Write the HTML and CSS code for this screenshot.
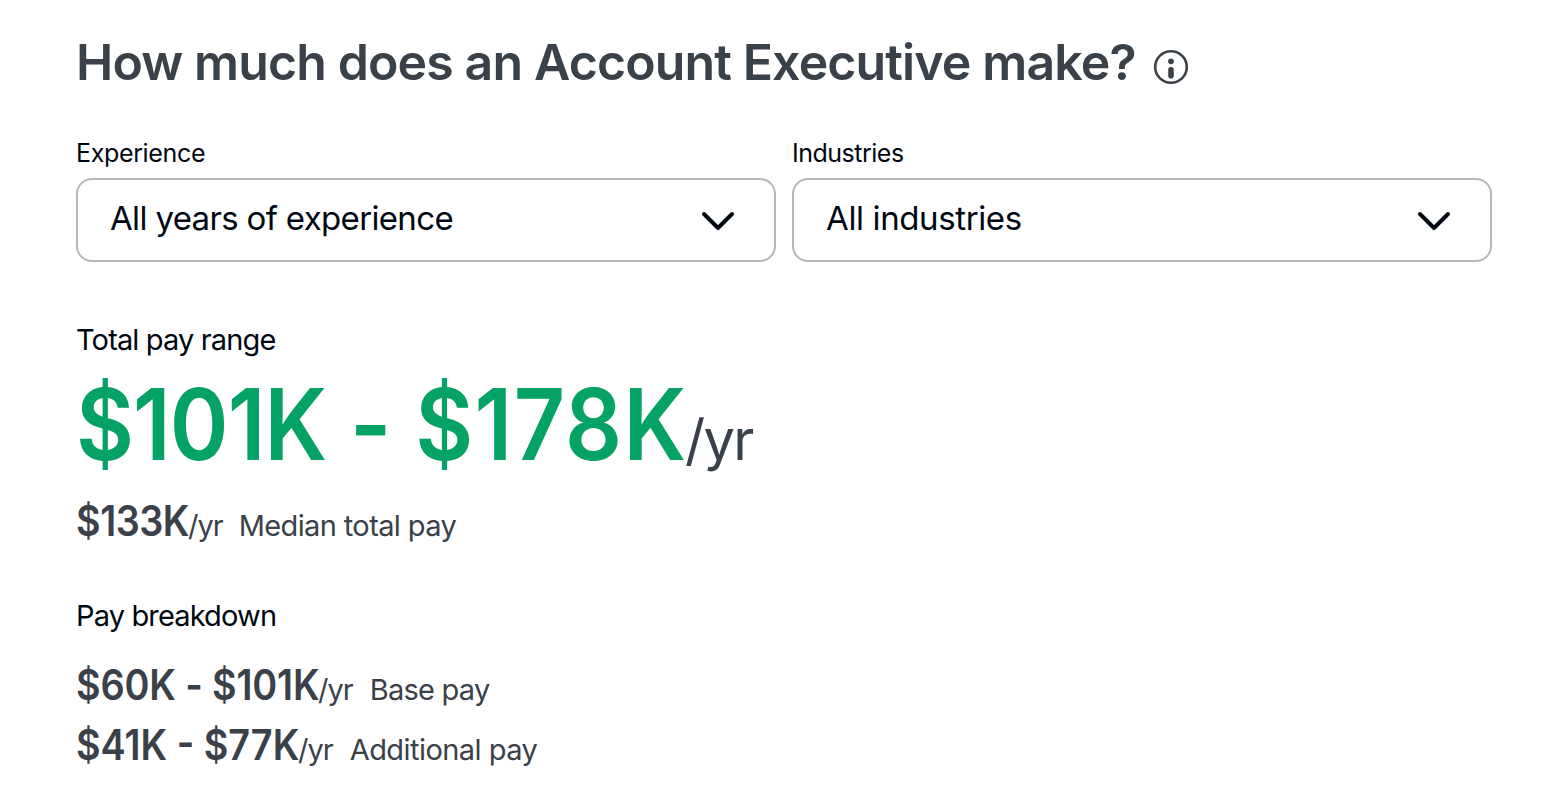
FILE: index.html
```html
<!DOCTYPE html>
<html lang="en">
<head>
    <meta charset="utf-8">
    <title>Account Executive Salary</title>
    <meta name="viewport" content="width=device-width, initial-scale=1">
    <link rel="stylesheet" href="styles.css">
</head>
<body>

<main class="salary">
  <div class="heading">
    <h1 class="title">How much does an Account Executive make?</h1>
    <svg class="info" viewBox="0 0 36 36" aria-hidden="true">
      <circle cx="18" cy="18" r="15.8" fill="none" stroke="currentColor" stroke-width="2.6"/>
      <circle cx="18" cy="12.3" r="2.9" fill="currentColor"/>
      <path d="M18 20.9v5.8" stroke="currentColor" stroke-width="5.6" stroke-linecap="round"/>
    </svg>
  </div>

  <div class="filters">
    <div class="filter">
      <div class="label">Experience</div>
      <div class="select">
        <span class="value value-exp">All years of experience</span>
        <svg class="chevron" viewBox="0 0 34 20" aria-hidden="true"><path d="M3 3l14 14L31 3"/></svg>
      </div>
    </div>
    <div class="filter">
      <div class="label label-ind">Industries</div>
      <div class="select">
        <span class="value">All industries</span>
        <svg class="chevron" viewBox="0 0 34 20" aria-hidden="true"><path d="M3 3l14 14L31 3"/></svg>
      </div>
    </div>
  </div>

  <h2 class="subtitle">Total pay range</h2>
  <div class="range"><span class="range-amount"><span class="range-low">$101K</span> - <span class="range-high">$178K</span></span><span class="range-per">/yr</span></div>
  <div class="row median"><span class="amount amount-median">$133K</span><span class="per">/yr</span><span class="name name-median">Median total pay</span></div>

  <h2 class="subtitle breakdown">Pay breakdown</h2>
  <div class="row"><span class="amount amount-base">$60K - $101K</span><span class="per">/yr</span><span class="name name-base">Base pay</span></div>
  <div class="row"><span class="amount amount-extra">$41K - $77K</span><span class="per">/yr</span><span class="name">Additional pay</span></div>
</main>

</body>
</html>
```

FILE: styles.css
```css
body {
	margin: 0;
	background: #fff;
	color: #000711;
	font-family: Inter, "Liberation Sans", sans-serif;
}

.salary {
	padding: 30px 60px 0 76px;
}

.heading {
	display: flex;
	align-items: center;
	gap: 17px;
	color: #3a4149;
}

.title {
	margin: 0;
	font-size: 50px;
	line-height: 64px;
	font-weight: 600;
	letter-spacing: -0.87px;
	white-space: nowrap;
}

.info {
	width: 36px;
	height: 36px;
	margin-top: 10px;
}

.filters {
	display: flex;
	gap: 16px;
	margin-top: 43px;
}

.filter {
	flex: 1;
}

.label {
	font-size: 25px;
	line-height: 32px;
	letter-spacing: -0.35px;
	margin-bottom: 9px;
}

.label-ind {
	letter-spacing: -0.5px;
}

.select {
	display: flex;
	align-items: center;
	justify-content: space-between;
	box-sizing: border-box;
	height: 84px;
	padding: 0 39px 0 32px;
	border: 2px solid #b2b8be;
	border-radius: 16px;
}

.value {
	font-size: 33px;
	line-height: 40px;
	letter-spacing: -0.38px;
	margin-bottom: 4px;
}

.value-exp {
	letter-spacing: -0.66px;
}

.chevron {
	width: 34px;
	height: 20px;
	margin-top: 2px;
	fill: none;
	stroke: #000711;
	stroke-width: 4;
	stroke-linecap: round;
	stroke-linejoin: round;
}

.subtitle {
	margin: 58px 0 0;
	font-size: 29px;
	line-height: 40px;
	font-weight: 400;
	letter-spacing: -0.85px;
}

.range {
	display: flex;
	align-items: baseline;
	margin-top: 10px;
	line-height: 108px;
	white-space: nowrap;
}

/* condensed figures, the width is the one left after scaling */
.range-amount,
.amount {
	font-weight: 600;
	transform: scaleX(0.9);
	transform-origin: 0 0;
}

.range-amount {
	width: 609px;
	color: #04a264;
	font-size: 99px;
	word-spacing: 1.5px;
}

.range-low {
	letter-spacing: -1px;
}

.range-high {
	letter-spacing: 1.5px;
}

.range-per {
	color: #3a4149;
	font-size: 56px;
	line-height: 1;
	letter-spacing: -1.7px;
}

.row {
	display: flex;
	align-items: baseline;
	color: #3a4149;
	font-size: 29px;
	line-height: 40px;
	white-space: nowrap;
}

.median {
	margin-top: 13px;
}

.amount {
	font-size: 42px;
	line-height: 60px;
}

.amount-median {
	width: 112px;
	letter-spacing: -0.5px;
}

.amount-base {
	width: 242px;
	letter-spacing: -0.15px;
}

.amount-extra {
	width: 222px;
}

.per {
	letter-spacing: -1px;
}

.name {
	margin-left: 17px;
	letter-spacing: -0.55px;
}

.name-median {
	margin-left: 16px;
	letter-spacing: -0.62px;
}

.name-base {
	letter-spacing: -0.75px;
}

.breakdown {
	margin: 45px 0 19px;
}
```
